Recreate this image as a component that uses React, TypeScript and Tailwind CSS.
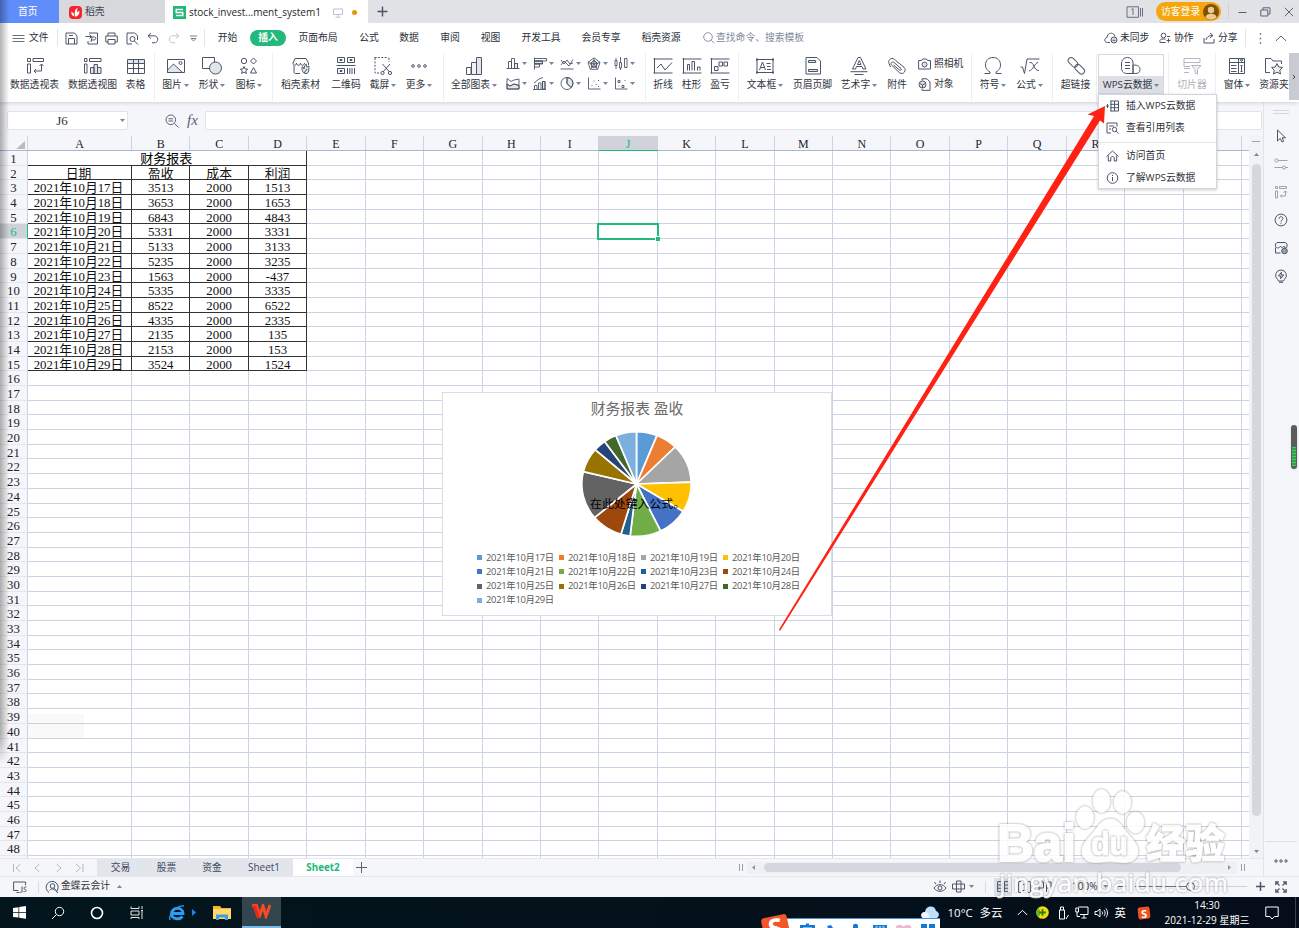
import type { ReactNode } from "react";

import clsx from "clsx";

type Row = [string, string, string, string];
type RibbonItem = { label: string; width: string; icon: ReactNode; caret?: boolean; muted?: boolean };

const rows: Row[] = [
  ["日期", "盈收", "成本", "利润"],
  ["2021年10月17日", "3513", "2000", "1513"],
  ["2021年10月18日", "3653", "2000", "1653"],
  ["2021年10月19日", "6843", "2000", "4843"],
  ["2021年10月20日", "5331", "2000", "3331"],
  ["2021年10月21日", "5133", "2000", "3133"],
  ["2021年10月22日", "5235", "2000", "3235"],
  ["2021年10月23日", "1563", "2000", "-437"],
  ["2021年10月24日", "5335", "2000", "3335"],
  ["2021年10月25日", "8522", "2000", "6522"],
  ["2021年10月26日", "4335", "2000", "2335"],
  ["2021年10月27日", "2135", "2000", "135"],
  ["2021年10月28日", "2153", "2000", "153"],
  ["2021年10月29日", "3524", "2000", "1524"],
];

const sliceColors = [
  "#5b9bd5",
  "#ed7d31",
  "#a5a5a5",
  "#ffc000",
  "#4472c4",
  "#70ad47",
  "#255e91",
  "#9e480e",
  "#636363",
  "#997300",
  "#264478",
  "#43682b",
  "#7cafdd",
];

const columns = "ABCDEFGHIJKLMNOPQRST".split("");
const gridCols = "grid grid-cols-[28px_104px_repeat(19,58.43px)_1fr]";
const line = "border-[#cbd3e5]";

function Svg({
  w = 22,
  h = 20,
  className = "text-[#4c5568]",
  sw = 1,
  children,
}: {
  w?: number;
  h?: number;
  className?: string;
  sw?: number;
  children: ReactNode;
}) {
  return (
    <svg
      width={w}
      height={h}
      viewBox={`0 0 ${w} ${h}`}
      fill="none"
      stroke="currentColor"
      strokeWidth={sw}
      className={clsx("shrink-0", className)}
    >
      {children}
    </svg>
  );
}

function Caret({ up = false }: { up?: boolean }) {
  return (
    <svg width="5" height="3" viewBox="0 0 5 3" className="shrink-0 fill-[#7b8498]">
      <path d={up ? "M0 3h5L2.5 0z" : "M0 0h5L2.5 3z"} />
    </svg>
  );
}

function Sep({ className = "w-2" }: { className?: string }) {
  return (
    <div className={clsx("flex shrink-0 justify-center", className)}>
      <div className="h-[48px] w-px bg-[#eceef2]" />
    </div>
  );
}

const icons = {
  pivotTable: (
    <Svg>
      <path d="M3.5 2.500h3v3h-3zM3.500 8h3v9h-3zM9 2.500h10.500v3H9zM17.500 8v7h-7.500M15.500 10l2-2 2 2M12 13l-2 2 2 2" />
    </Svg>
  ),
  pivotChart: (
    <Svg>
      <path d="M2.500 2.500h2.500v3h-2.500zM2.500 8h2.500v9h-2.500zM7.500 2.500h11.500v3H7.500z" />
      <path d="M8.500 11.500h3.500v6H8.500zM12 8.500h3.500v9H12zM15.500 11.500h3.500v6h-3.500z" fill="#e2e5ea" />
    </Svg>
  ),
  table: (
    <Svg>
      <path d="M2.500 3.500h17v14h-17z" />
      <path d="M3 4h16v3H3z" fill="#e2e5ea" stroke="none" />
      <path d="M2.500 7.500h17M2.500 12.500h17M8.500 3.500v14M13.500 3.500v14" />
    </Svg>
  ),
  picture: (
    <Svg>
      <path d="M2.500 3.500h17v13h-17z" />
      <path d="m2.500 14 6-6 9 8.500h-15z" fill="#e2e5ea" />
      <circle cx="15.500" cy="7" r="1.500" />
    </Svg>
  ),
  shapes: (
    <Svg>
      <path d="M1.500 1.500h12v11h-12z" />
      <circle cx="14.500" cy="12" r="6" fill="#e2e5ea" />
    </Svg>
  ),
  glyphs: (
    <Svg>
      <circle cx="6" cy="5" r="2.700" />
      <path d="m15.500 2 3 3-3 3-3-3zM6 10.500l1.100 2.500 2.600.200-2 1.700.700 2.600-2.400-1.400-2.400 1.400.700-2.600-2-1.700 2.600-.200zM15.500 11.500l3 5.500h-6z" />
    </Svg>
  ),
  store: (
    <Svg>
      <path d="M4 9.500V16c0 1 .5 1.500 1.500 1.500H10M3 7l2-4.500h11L18.500 7v2M3 7c0 3 3.500 3 3.500 0 0 3 4 3 4 0 0 3 4 3 4 0" />
      <path d="M12 11c2-.5 2 2 2 2s0-4 2.500-5c-.5 3 .5 3 .5 3l2-1c-.5 4 .5 7-3 7.500-3.500 0-4-3-4-6.500zM14 17l3-4" fill="#e2e5ea" />
    </Svg>
  ),
  qr: (
    <Svg>
      <path d="M2.500 1.500h7v5h-7zM12.500 1.500h7v5h-7zM2.500 12.500h7v5h-7zM1.500 9.500h19M12.500 12v6M14.800 12v6M17 12v6M19.500 12v6" />
      <path d="M5 3.500h2v1H5zM15 3.500h2v1h-2zM5 14.500h2v1H5z" fill="currentColor" />
    </Svg>
  ),
  crop: (
    <Svg>
      <path d="M2.500 1.500h14M3 2v15h5M17 2v4" strokeDasharray="2 1.400" />
      <path d="m10.500 8 7 8M18 8l-7 8" />
      <circle cx="10.500" cy="17" r="1.600" />
      <circle cx="18" cy="17" r="1.600" />
    </Svg>
  ),
  more: (
    <Svg>
      <circle cx="5" cy="10" r="1.300" />
      <circle cx="11" cy="10" r="1.300" />
      <circle cx="17" cy="10" r="1.300" />
    </Svg>
  ),
  charts: (
    <Svg>
      <path d="M3.500 11.500h4.500v7H3.500zM13.500 1.500h5v17h-5z" />
      <path d="M8.500 6.500h5v12h-5z" fill="#f1f2f5" />
      <path d="M14 2h4v16h-4z" fill="#e2e5ea" stroke="none" />
    </Svg>
  ),
  sparkLine: (
    <Svg>
      <path d="M1.500 3h19M2.500 2v15.500M1.500 17h19M5 12l4-4 4 6 7-7.500" />
    </Svg>
  ),
  sparkBar: (
    <Svg>
      <path d="M1.500 3h19M2.500 2v15.500M1.500 17h19M6.500 14.500V8.500h2v6M11 14.500V5.500h2.500v9M16.500 14.500V11h2.500v3.500" />
    </Svg>
  ),
  sparkWin: (
    <Svg>
      <path d="M1.500 3h19M2.500 2v15.500M1.500 17h19M5.500 10.500h3.500v4H5.500zM10 6h3.500v4H10zM15 6h3.500v4H15z" />
    </Svg>
  ),
  textBox: (
    <Svg>
      <path d="M3 3.500h16v13H3z" />
      <path d="M2 2.500h2v2H2zM18 2.500h2v2h-2zM2 15.500h2v2H2zM18 15.500h2v2h-2z" fill="currentColor" stroke="none" />
      <path d="m5.500 14 3-8 3 8M6.500 11.500h4M12.500 7.500h4M13 10.500h3.500M13 13.500h4" />
    </Svg>
  ),
  headerFooter: (
    <Svg>
      <path d="M4 1.500h11l3.500 3.500v13H4z" />
      <path d="M6.500 4.500h7v2h-7zM6.500 13.500h9v2h-9z" fill="#e2e5ea" />
    </Svg>
  ),
  wordArt: (
    <Svg>
      <path d="M10 1.500h2.500L18 13h-3l-1-2.500H8.500L7.500 13h-3zM9.500 8.500h3.500l-1.700-4zM2.500 15.700h17" />
      <path d="M6.500 18.500h9" />
    </Svg>
  ),
  clip: (
    <Svg>
      <path d="m4.500 11-1.500-3.500c-1-2.500.5-5 3-5 1.500 0 2.500.8 3.500 1.800l8.500 7c3 3-.5 8-4.500 5.500L5.500 9c-1.500-1.500.5-4 2.500-2.500l7 6c1 1-.2 2.500-1.500 1.500L7.500 9" />
    </Svg>
  ),
  omega: (
    <Svg>
      <path d="M2.500 17.500h5.500v-1.500C4.500 14 3.500 11.500 3.500 9c0-4.500 3-7.500 7.500-7.500S18.500 4.500 18.500 9c0 2.500-1 5-4.500 7v1.500h5.500" />
    </Svg>
  ),
  root: (
    <Svg>
      <path d="M1.500 11h2l2 6.500L8 3h12.500M10.500 6.500c5-1 4 8.500 9.500 8M19 6.500c-3 0-5 8-9 8.500" />
    </Svg>
  ),
  link: (
    <Svg>
      <rect x="2.300" y="3.300" width="11" height="6" rx="3" transform="rotate(45 7.800 6.500)" />
      <rect x="9" y="10.200" width="11" height="6" rx="3" transform="rotate(45 14.500 13.500)" />
    </Svg>
  ),
  cloudData: (
    <Svg>
      <path d="M7 17.500c-4 0-5.500-2.500-5.500-6V8C1.500 4 4 1.500 7.500 1.500S13 4 13 7v10.500z" />
      <path d="M13 9c5 0 7 1.500 7 4.500s-2 4-4.500 4H13zM5 6.500h5M5 9.500h5M5 12.500h5" />
    </Svg>
  ),
  slicer: (
    <Svg className="text-[#b4b8c0]">
      <path d="M3 2.500h16v4H3zM9 10.500H3v-4M8 16.500H3M3 12.500h6" />
      <path d="M10.500 9.500h9.500l-3.500 4v4.500l-2.500-1v-3.500z" fill="#f1f2f4" />
    </Svg>
  ),
  form: (
    <Svg>
      <path d="M3.500 2.500h15v15h-15zM3.500 6.500h15M12.500 2.500v15M5 9.500h5.500M5 12.500h5.500M5 15.500h5.500M15.500 9v7" />
      <path d="M14.200 3.800h2.800L15.600 5.500zM14.500 9.500h2M14.500 15.500h2" />
    </Svg>
  ),
  resource: (
    <Svg>
      <path d="M7 16.500H2.500v-14H8l2 2.500h8.500v3" />
      <path d="m14 7.500 1.700 3.500 3.800.500-2.700 2.700.700 3.800-3.500-1.800-3.500 1.800.700-3.800-2.700-2.700 3.800-.500z" fill="#eef0f3" />
    </Svg>
  ),
};

const small = (d: string, fill?: string) => (
  <Svg w={14} h={13} sw={0.9}>
    {fill && <path d={fill} fill="#e2e5ea" />}
    <path d={d} />
  </Svg>
);

const chartIcons = [
  small("M2.500 4.500h3v7M2.500 4.500v7M5.500 11.500V1.500h3v10M8.500 6.500h3v5M.5 11.500h13", "M8.500 6.500h3v5h-3z"),
  small("M1.500.5v12M1.500 1.500h12v2.500h-12M1.500 4h8v3h-8M1.500 7h5v3h-5", "M1.500 4h8v2.500h-8z"),
  small("M.5 12h13M1 8l3-4 5 5 4-6.500M1 3l3 4 3-4 3 4 3-1"),
  small("M7 .8l6 4.500-2.300 7H3.300L1 5.300zM7 3.500l3.200 2.500L9 10H5L3.800 6zM7 1v6M1 5.500l6 1.500 6-1.500M3.500 12 7 7l3.500 5", "M7 3.500l3.200 2.500L9 10H5L3.800 6z"),
  small("M2 1v2.500M2 8.500V12M1 3.500h2v5H1zM6.500 0v5.500M6.500 11v2M5.500 5.500h2V11h-2zM10.500 1.500h2.500v9h-2.500z"),
  small("M1 1.500l4 3 3-1.500 5-1V12H1zM1 7l3 2 4-2 5 1.500", "M1 7l3 2 4-2 5 1.500V12H1z"),
  small("M1.500 12V8.500h2.500V12M5.500 12V6h2.500v6M9.500 12V4.500H12V12M0 12.500h13M1 6l5-4 4-1.500", "M9.500 4.500H12V12H9.500z"),
  small("M13 6.500a6 6 0 1 1-12 0 6 6 0 0 1 12 0zM7 .5v6l4 4", "M7 .5v6l4 4c4-5 1-10-4-10z"),
  small("M1.500.5v11.500h12M4.500 8.500h1M6.500 4h1M8.500 7.500h1M11 3.500h1M11 9.500h1"),
  small("M1.500.5v11.500h12M4 3.500h2v2H4zM4.500 9h1M8 8.500h2v2H8zM10.500 3.500h1"),
];

const groups: RibbonItem[][] = [
  [
    { label: "数据透视表", width: "w-[59px]", icon: icons.pivotTable },
    { label: "数据透视图", width: "w-[57px]", icon: icons.pivotChart },
    { label: "表格", width: "w-[29px]", icon: icons.table },
  ],
  [
    { label: "图片", width: "w-[35px]", icon: icons.picture, caret: true },
    { label: "形状", width: "w-[38px]", icon: icons.shapes, caret: true },
    { label: "图标", width: "w-[36px]", icon: icons.glyphs, caret: true },
  ],
  [
    { label: "稻壳素材", width: "w-[47px]", icon: icons.store },
    { label: "二维码", width: "w-[44px]", icon: icons.qr },
    { label: "截屏", width: "w-[30px]", icon: icons.crop, caret: true },
    { label: "更多", width: "w-[42px]", icon: icons.more, caret: true },
  ],
  [
    { label: "折线", width: "w-[28px]", icon: icons.sparkLine },
    { label: "柱形", width: "w-[29px]", icon: icons.sparkBar },
    { label: "盈亏", width: "w-[28px]", icon: icons.sparkWin },
  ],
  [
    { label: "文本框", width: "w-[46px]", icon: icons.textBox, caret: true },
    { label: "页眉页脚", width: "w-[49px]", icon: icons.headerFooter },
    { label: "艺术字", width: "w-[44px]", icon: icons.wordArt, caret: true },
    { label: "附件", width: "w-[32px]", icon: icons.clip },
  ],
  [
    { label: "符号", width: "w-[36px]", icon: icons.omega, caret: true },
    { label: "公式", width: "w-[37px]", icon: icons.root, caret: true },
  ],
];

function RibbonButton({ item }: { item: RibbonItem }) {
  return (
    <div className={clsx("flex shrink-0 flex-col items-center pt-[3px]", item.width)}>
      {item.icon}
      <div
        className={clsx(
          "mt-[2px] flex items-center gap-[2px] whitespace-nowrap leading-[14px]",
          item.muted ? "text-[#b0b3b9]" : "text-[#30343c]",
        )}
      >
        {item.label}
        {item.caret && <Caret />}
      </div>
    </div>
  );
}

function Group({ items }: { items: RibbonItem[] }) {
  return (
    <>
      {items.map((i) => (
        <RibbonButton key={i.label} item={i} />
      ))}
    </>
  );
}

function TitleBar() {
  return (
    <div className="flex h-[23px] items-center bg-[#e1e2e6] text-[#3c4250]">
      <div className="flex h-full w-[59px] items-center bg-[#5f8df9] pt-[2px] pl-[18px] text-white">首页</div>
      <div className="flex h-full w-[106px] items-center gap-[3px] bg-[#d7d9dd] pt-[2px] pl-[10px]">
        <svg width="13" height="13" viewBox="0 0 13 13">
          <rect width="13" height="13" rx="4" fill="#f4242f" />
          <path d="M6 9.500C5 6 6 3 8.500 1.800 8 4 8.500 5 8 6.500l2.300-1.700c.4 3-1 5.700-4.300 6zM5.300 10.300C3 9.800 2 8 2.500 5.500L5 7.800z" fill="#fff" />
        </svg>
        稻壳
      </div>
      <div className="flex h-full w-[203px] items-center bg-white pt-[2px] pl-[8px] text-[#1c1f26]">
        <svg width="13" height="13" viewBox="0 0 13 13">
          <rect width="13" height="13" fill="#21b978" />
          <path d="M10 3.500H3.200v3h6.600v3H3" fill="none" stroke="#fff" strokeWidth="1.400" />
        </svg>
        <span className="ml-[3px] w-[131px] whitespace-nowrap text-[10px]">stock_invest...ment_system1</span>
        <Svg w={10} h={10} className="ml-[13px] text-[#b8c2da]">
          <path d="M.5 1h9v5.500h-9zM5 6.500V9M2.500 9.200h5" />
        </Svg>
        <span className="ml-[9px] size-[5px] rounded-full bg-[#e8950c]" />
      </div>
      <Svg w={11} h={11} className="ml-[9px] text-[#4a5263]" sw={1.4}>
        <path d="M5.500.5v10M.5 5.500h10" />
      </Svg>
      <div className="flex-1" />
      <Svg w={18} h={12} className="text-[#66708a]">
        <path d="M1 .8h11.500v10.500H1zM14.500 2v8.500M16.500 2v8.500M5.500 3.500 7 2.500v6.500" />
      </Svg>
      <div className="ml-[12.500px] flex h-[19px] w-[65px] items-center rounded-full bg-[#f6a50d] pt-px pl-[5px] text-white">
        <span className="w-[42px]">访客登录</span>
        <svg width="16" height="16" viewBox="0 0 16 16">
          <circle cx="8" cy="8" r="8" fill="#7b5207" />
          <circle cx="8" cy="6" r="3.200" fill="#ecc98c" />
          <path d="M2.500 13.500c0-5 11-5 11 0a8 8 0 0 1-11 0z" fill="#ecc98c" />
        </svg>
      </div>
      <div className="ml-[7px] h-[15px] w-px bg-[#cfd1d6]" />
      <Svg w={9} h={10} className="ml-[9px] text-[#5a6272]">
        <path d="M.5 5.500h8" />
      </Svg>
      <Svg w={11} h={10} className="ml-[13px] text-[#5a6272]">
        <path d="M.8 3h7v6h-7zM3 3V.8h7V7H8" />
      </Svg>
      <Svg w={10} h={10} className="ml-[13px] mr-[5px] text-[#5a6272]">
        <path d="m.8.8 8.400 8.400M9.200.8.800 9.200" />
      </Svg>
    </div>
  );
}

const menuTabs = [
  ["开始", "w-[45px]"],
  ["插入", "w-[36px]"],
  ["页面布局", "w-[64px]"],
  ["公式", "w-[38px]"],
  ["数据", "w-[42px]"],
  ["审阅", "w-[40px]"],
  ["视图", "w-[41px]"],
  ["开发工具", "w-[60px]"],
  ["会员专享", "w-[60px]"],
  ["稻壳资源", "w-[60px]"],
];

function MenuBar() {
  return (
    <div className="flex h-[30px] items-center text-[#2b2f38]">
      <Svg w={13} h={9} className="ml-[12px] text-[#6b7280]">
        <path d="M.5 1.500h12M.5 4.500h12M.5 7.500h12" />
      </Svg>
      <span className="ml-[4px] w-[28px]">文件</span>
      <div className="h-[18px] w-px bg-[#e3e5ea]" />
      <div className="flex w-[146px] items-center pl-[7px]">
        <Svg w={13} h={13}>
          <path d="M1 1h8.500L12 4v8H1zM3.500 12V6.500h6V12M4 3.500h4" />
        </Svg>
        <Svg w={14} h={13} className="ml-[7px] text-[#4c5568]">
          <path d="M4 1h8.500v11H3V9M.5 4.500h6M4.500 2.500l2 2-2 2M6 10l1-5h2.500c2 0 1.500 3-.5 3H6.500" />
        </Svg>
        <Svg w={13} h={13} className="ml-[6px] text-[#4c5568]">
          <path d="M3 4V1h7v3M3 10H.8V4h11.500v6H10M3 7.500h7V12H3z" />
        </Svg>
        <Svg w={13} h={13} className="ml-[8px] text-[#4c5568]">
          <path d="M6 12H1V1h7.500L11.500 3.500V8" />
          <circle cx="6.500" cy="7" r="2.500" />
          <path d="m8.500 9 3.500 3.500" />
        </Svg>
        <Svg w={12} h={12} className="ml-[8px] text-[#4c5568]">
          <path d="M4 1 1 3.800 4 6.500M1 3.800h6c5 0 5 7 0 7H5" />
        </Svg>
        <Svg w={12} h={12} className="ml-[9px] text-[#c3c6cc]">
          <path d="m8 1 3 2.800L8 6.500M11 3.800H5c-5 0-5 7 0 7h2" />
        </Svg>
        <Svg w={7} h={7} className="ml-[10px] text-[#7a8190]">
          <path d="M0 1h7M1 3.500h5L3.500 6z" />
        </Svg>
      </div>
      <div className="h-[18px] w-px bg-[#e3e5ea]" />
      {menuTabs.map(([label, width]) => (
        <div key={label} className={clsx("flex shrink-0 justify-center whitespace-nowrap", width)}>
          {label === "插入" ? (
            <span className="h-4 w-[36px] rounded-full bg-[#21b97c] text-center font-bold leading-4 text-white">{label}</span>
          ) : (
            label
          )}
        </div>
      ))}
      <Svg w={12} h={12} className="ml-[12px] text-[#8b95ab]">
        <circle cx="5" cy="5" r="4.300" />
        <path d="m8.200 8.200 3 3" />
      </Svg>
      <span className="ml-[1px] text-[#7f8a9f]">查找命令、搜索模板</span>
      <div className="flex-1" />
      <Svg w={14} h={12}>
        <path d="M6 10.500H3.500C0 10.500 0 6 3 5.500 3 0 10.500 0 11 4.500" />
        <circle cx="10" cy="8" r="3" fill="#dfe3ea" />
        <path d="M8.500 8.300h3" />
      </Svg>
      <span className="ml-[2px] w-[39px]">未同步</span>
      <Svg w={12} h={12}>
        <circle cx="4.500" cy="3.500" r="2.300" />
        <path d="M6.500 10.500H1c-.5-2 0-3.500 3-3.500h2.500M8 4.500h3M7.500 8.500h4M9.500 6.500v4" />
      </Svg>
      <span className="ml-[3px] w-[29px]">协作</span>
      <Svg w={12} h={12}>
        <path d="M1 6v5h10V7M3 8c.5-3 3-4.500 6-4.500M7 1l3 2.500-3 2.500" />
      </Svg>
      <span className="ml-[3px] w-[27px]">分享</span>
      <div className="h-[18px] w-px bg-[#e3e5ea]" />
      <Svg w={3} h={11} className="ml-[13px] text-[#5a6374]" sw={1.4}>
        <path d="M.8 1h1.400M.8 5.500h1.400M.8 10h1.400" />
      </Svg>
      <Svg w={12} h={7} className="ml-[13px] mr-[12px] text-[#5a6374]">
        <path d="m.8 6 5.200-5 5.200 5" />
      </Svg>
    </div>
  );
}

function Ribbon() {
  return (
    <div className="flex h-[49px] overflow-hidden pl-[5px]">
      <Group items={groups[0]} />
      <Sep />
      <Group items={groups[1]} />
      <Sep className="w-[10px]" />
      <Group items={groups[2]} />
      <Sep className="w-[6px]" />
      <RibbonButton item={{ label: "全部图表", width: "w-[56px]", icon: icons.charts, caret: true }} />
      <div className="grid w-[139px] shrink-0 grid-cols-5 content-start gap-y-[7px] pl-1 pt-1">
        {chartIcons.map((icon, i) => (
          <div key={i} className="flex items-center gap-[2px]">
            {icon}
            <Caret />
          </div>
        ))}
      </div>
      <Sep />
      <Group items={groups[3]} />
      <Sep />
      <Group items={groups[4]} />
      <div className="flex w-[54px] shrink-0 flex-col gap-[6px] pl-[5px] pt-[4px] text-[#30343c]">
        <div className="flex items-center gap-[3px] whitespace-nowrap leading-[14px]">
          <Svg w={13} h={12}>
            <path d="M.6 2.500h3L4.500 1h4l1 1.500h3v8.500H.6z" />
            <circle cx="6.500" cy="6.500" r="2.500" fill="#e2e5ea" />
          </Svg>
          照相机
        </div>
        <div className="flex items-center gap-[3px] whitespace-nowrap leading-[14px]">
          <Svg w={13} h={13}>
            <path d="M4 2.500V.8h5L12 4v8.300H4V11" />
            <circle cx="4.500" cy="6.500" r="3.500" fill="#e2e5ea" />
            <path d="M2 5.500 4.500 7 7 5.500M4.500 7v3" />
          </Svg>
          对象
        </div>
      </div>
      <Sep />
      <Group items={groups[5]} />
      <Sep />
      <RibbonButton item={{ label: "超链接", width: "w-[39px]", icon: icons.link }} />
      <Sep className="w-[3px]" />
      <div className="mt-px flex h-[40px] w-[66px] shrink-0 flex-col border border-[#d4d8de] bg-white">
        <div className="flex h-[21px] justify-center pt-px">{icons.cloudData}</div>
        <div className="flex h-[17px] items-center justify-center gap-[2px] whitespace-nowrap bg-[#dce0e6] pt-px text-[#30343c]">
          WPS云数据
          <Caret />
        </div>
      </div>
      <Sep />
      <RibbonButton item={{ label: "切片器", width: "w-[40px]", icon: icons.slicer, muted: true }} />
      <Sep className="w-[6px]" />
      <RibbonButton item={{ label: "窗体", width: "w-[38px]", icon: icons.form, caret: true }} />
      <div className="w-[33px] shrink-0 overflow-hidden">
        <RibbonButton item={{ label: "资源夹", width: "w-[36px]", icon: icons.resource }} />
      </div>
      <div className="flex h-[47px] w-[10px] shrink-0 items-center justify-center bg-[#c9cbd2]">
        <Svg w={4} h={6} className="text-[#3e4555]">
          <path d="m.8.8 2.200 2.200L.8 5.200" />
        </Svg>
      </div>
    </div>
  );
}

function FormulaBar() {
  return (
    <div className="flex h-[34px] shrink-0 items-center pl-[7px] pt-[3px]">
      <div className="flex h-[19px] w-[121px] items-center rounded-[2px] border border-[#e0e3e8] bg-white">
        <span className="w-[112px] pr-[4px] text-center font-['Liberation_Serif'] text-[13px] text-[#333]">J6</span>
        <Caret />
      </div>
      <Svg w={14} h={14} className="ml-[37px] text-[#5a6377]">
        <circle cx="5.800" cy="5.800" r="4.800" />
        <path d="m9.500 9.500 4 4M3.500 4.800h4.600M3.500 7h4.600" />
      </Svg>
      <span className="ml-[8px] w-[18px] font-['Liberation_Serif'] text-[15px] italic leading-none text-[#596174]">fx</span>
      <div className="mr-px h-[19px] flex-1 rounded-[2px] border border-[#e0e3e8] bg-white" />
    </div>
  );
}

const serif = "font-['Liberation_Serif','Noto_Sans_CJK_SC',serif]";

function Sheet() {
  return (
    <div className={clsx("relative w-[1249px] overflow-hidden", serif)}>
      <div className={clsx(gridCols, "h-[15px] grid-rows-[14px] border-b border-[#a9b8d2] bg-[#f5f6f9]")}>
        <div className="flex items-end justify-end border-r border-[#cbd3e5] pr-[2px] pb-px">
          <svg width="9" height="8" viewBox="0 0 9 8" className="fill-[#b8bbc2]">
            <path d="M9 0v8H0z" />
          </svg>
        </div>
        {columns.map((c) => (
          <div
            key={c}
            className={clsx(
              "relative border-r text-center text-[12px] leading-[17px]",
              c === "J" ? "border-[#d0d3da] bg-[#d0d3da] text-[#21b97c]" : "border-[#cbd3e5] text-[#1e222a]",
            )}
          >
            {/* the last two headers sit under the open menu */}
            {c < "S" && c}
            {c === "J" && <div className="absolute -right-px -bottom-px left-0 h-[1.500px] bg-[#21b97c]" />}
          </div>
        ))}
      </div>
      {Array.from({ length: 49 }, (_, r) => {
        const data = rows[r - 1];
        return (
          <div key={r} className={clsx(gridCols, "h-[14.700px] grid-rows-[14.700px] bg-white")}>
            <div
              className={clsx(
                "border-r border-b text-center text-[12.800px] leading-[16px]",
                r === 5
                  ? "border-b-[#e3e6ed] border-r-[#21b97c] bg-[#cfd2da] text-[#21b97c]"
                  : "border-b-[#e3e6ed] border-r-[#cbd3e5] bg-[#f5f6f9] text-[#1e222a]",
              )}
            >
              {r < 48 ? r + 1 : ""}
            </div>
            {r === 0 && (
              <div className="col-span-4 border-r border-b border-[#333] pr-[2px] text-center text-[13px] leading-[15.500px]">
                财务报表
              </div>
            )}
            {columns.slice(r === 0 ? 4 : 0).map((c, i) => (
              <div
                key={c}
                className={clsx(
                  "border-r border-b text-center text-[12.800px] leading-[16px] whitespace-nowrap",
                  data && i < 4 ? "border-[#333] text-[#111]" : line,
                  c === "J" && r === 5 && "relative",
                  data && i === 0 && "pr-[2px]",
                )}
              >
                {data && i < 4 ? data[i] : null}
                {c === "J" && r === 5 && (
                  <>
                    <div className="absolute -top-px -right-[2px] -bottom-[2px] -left-[2px] border-2 border-[#21b97c]" />
                    <div className="absolute -right-[3px] -bottom-[3px] size-[5px] border-t border-l border-white bg-[#21b97c]" />
                  </>
                )}
              </div>
            ))}
            <div className={clsx("border-b", line)} />
          </div>
        );
      })}
      <div className="absolute top-[578px] left-[28px] h-[24px] w-[56px] bg-[#8a8a8a]/5" />
      <PieCard />
    </div>
  );
}

function PieCard() {
  const values = rows.slice(1).map((r) => Number(r[1]));
  const total = values.reduce((a, b) => a + b, 0);
  const point = (v: number) => {
    const a = (v / total) * Math.PI * 2;
    return `${(55.5 + 54.7 * Math.sin(a)).toFixed(2)} ${(54 - 52.4 * Math.cos(a)).toFixed(2)}`;
  };
  let sum = 0;
  const slices = values.map((v, i) => {
    const from = sum;
    sum += v;
    return (
      <path key={i} d={`M55.5 54L${point(from)}A54.7 52.4 0 0 1 ${point(sum)}Z`} fill={sliceColors[i]} />
    );
  });
  return (
    <div className="absolute top-[256px] left-[442px] h-[224px] w-[390px] border border-[#dcdde0] bg-white">
      <div className="pt-[5px] text-center text-[14.800px] leading-[22px] text-[#6b6b6b]">财务报表 盈收</div>
      <div className="relative mt-[9.500px] ml-[138px] h-[108px] w-[112px]">
        <svg width="112" height="108" stroke="#fff" strokeWidth="1.700">
          {slices}
        </svg>
        <span className="absolute top-[65px] left-[9px] text-[11.900px] leading-[18px] whitespace-nowrap text-black">
          在此处键入公式。
        </span>
      </div>
      <div className="mt-[13px] ml-[34px] grid grid-cols-[repeat(4,82px)] font-['Open_Sans','Noto_Sans_CJK_SC',sans-serif] text-[9.400px] leading-[14.300px] tracking-[-0.280px] text-[#595959]">
        {values.map((_, i) => (
          <div key={i} className="flex items-center gap-[4px] whitespace-nowrap">
            <span className="size-[5px]" style={{ background: sliceColors[i] }} />
            {rows[i + 1][0]}
          </div>
        ))}
      </div>
    </div>
  );
}

function VScroll() {
  return (
    <div className="flex w-[14px] flex-col items-center bg-[#f1f2f5] pt-[5px]">
      <div className="h-px w-[8px] bg-[#97a3bb]" />
      <div className="mt-[11px]">
        <Caret up />
      </div>
      <div className="mt-[8px] h-[652px] w-[9px] rounded-full bg-[#d5d7df]" />
      <div className="mt-[34px]">
        <Caret />
      </div>
    </div>
  );
}

function Sidebar() {
  return (
    <div className="relative flex w-[36px] flex-col items-center border-l border-[#e1e4e9] bg-[#f5f6f9] pr-px">
      <div className="mt-[8px] h-[4px] w-[16px] border-y border-[#d3d6dc]" />
      <div className="mt-[15px] flex flex-col items-center gap-[14px]">
        <Svg w={14} h={14}>
          <path d="M3.500 1v11l2.700-2.500L8 13l1.700-.800L8 8.800h3.500z" />
        </Svg>
        <Svg w={14} h={14} className="text-[#9ba2b0]">
          <circle cx="2.500" cy="3.500" r="1.600" />
          <path d="M4.100 3.500H13.500M.5 10.500h8" />
          <circle cx="10" cy="10.500" r="1.600" />
          <path d="M11.600 10.500H14" />
        </Svg>
        <Svg w={14} h={14} className="text-[#9ba2b0]">
          <path d="M1.500 1.500h2v2h-2zM1.500 6h2v7h-2zM5.500 1.500h7v2h-7zM11.500 6v5h-5M9.500 7.500l2-1.500 1.500 1.500M8 9.500 6.500 11 8 12.500" />
        </Svg>
        <Svg w={14} h={14}>
          <circle cx="7" cy="7" r="5.900" />
          <path d="M5 5.800c0-3 4-2.500 4-.3C9 7 7 6.800 7 8.500M7 9.500v1.200" />
        </Svg>
        <Svg w={14} h={14}>
          <path d="M6.500 12H1.500V6.500M1.500 5.500V3L3 1.500h8.500L13 3v3c-1 1.500-3 1-3-1-1 2-3 2-3.500 0-1 2.500-3.500 2.500-5 .5" />
          <circle cx="10.500" cy="10" r="2.800" fill="#9aa1ae" />
        </Svg>
        <Svg w={14} h={14}>
          <path d="M7 1a5.300 5.300 0 0 1 3.300 9.500L9.500 12h-5l-.800-1.500A5.300 5.300 0 0 1 7 1zM5 13.300h4M7.500 3.200 4.500 7H7l-.500 2.800L9.800 6H7.200z" />
        </Svg>
      </div>
      <div className="mt-[558px] h-px w-[32px] bg-[#dfe1e6]" />
      <Svg w={14} h={4} className="mt-[17px] text-[#4c5568]">
        <circle cx="2" cy="2" r="1.200" />
        <circle cx="7" cy="2" r="1.200" />
        <circle cx="12" cy="2" r="1.200" />
      </Svg>
      <div className="absolute top-[323px] right-[2px] h-[44px] w-[6px] overflow-hidden rounded-full bg-[#5c5c5c] pt-[22px] shadow">
        <div className="mx-px h-[19px] bg-[repeating-linear-gradient(#3ccf62_0_1px,#3b9a4b_1px_3px)]" />
      </div>
    </div>
  );
}

function SheetTabs() {
  return (
    <div className="flex h-[18px] shrink-0 items-center border-t border-[#e5e7ec] bg-[#f5f6f9] text-[#41485a]">
      <Svg w={97} h={12} className="text-[#b0b6c2]">
        <path d="M13.500 2v8M20.500 2l-4.500 4 4.500 4M39.500 2 35 6l4.500 4M56.500 2 61 6l-4.500 4M76 2l4.500 4-4.500 4M83 2v8" />
      </Svg>
      <div className="flex h-full w-[196px] items-center bg-[#e3e5ec] text-center">
        <span className="w-[47px] pt-px">交易</span>
        <span className="w-[45px] pt-px">股票</span>
        <span className="w-[46px] pt-px">资金</span>
        <span className="w-[58px] text-[10px]">Sheet1</span>
      </div>
      <div className="flex h-full w-[60px] items-center justify-center bg-white pt-px text-[9.800px] font-bold text-[#21b97c]">
        Sheet2
      </div>
      <Svg w={11} h={11} className="ml-[3px] text-[#5a6275]">
        <path d="M5.500 0v11M0 5.500h11" />
      </Svg>
      <div className="flex-1" />
      <Svg w={4} h={7} className="text-[#8c95a8]" sw={0.9}>
        <path d="M.5 0v7M3.500 0v7" />
      </Svg>
      <div className="mx-[4px] flex h-[12px] w-[490px] items-center bg-[#eff0f4] pl-[5px]">
        <svg width="3" height="5" className="fill-[#8c95a8]">
          <path d="M3 0v5L0 2.500z" />
        </svg>
        <div className="ml-[9px] h-[9px] w-[417px] rounded-full bg-[#d5d7df]" />
        <svg width="3" height="5" className="ml-[47px] fill-[#8c95a8]">
          <path d="M0 0v5l3-2.500z" />
        </svg>
      </div>
      <Svg w={4} h={7} className="mr-[18px] text-[#8c95a8]" sw={0.9}>
        <path d="M.5 0v7M3.500 0v7" />
      </Svg>
    </div>
  );
}

function StatusBar() {
  return (
    <div className="flex h-[21px] shrink-0 items-center border-t border-[#e5e7ec] bg-[#f5f6f9] pb-px text-[#30343c]">
      <Svg w={14} h={12} className="ml-[13px] text-[#4c5568]">
        <path d="M5.500 9.500H.6V1h12v3M3.500 11.500h3M9 5.500v5c0 1-1.500 1-2 .5M13.500 6c-3-.5-3 2-1.500 2.300 2 .500 1 3-1.500 2.200" />
      </Svg>
      <div className="ml-[11px] h-[12px] w-px bg-[#dadde3]" />
      <Svg w={14} h={14} className="ml-[6px] text-[#4c5568]">
        <path d="M4 12.500a6 6 0 1 1 7-.5" />
        <circle cx="7.500" cy="6" r="2.300" />
        <path d="M4.500 10.500c1.500-2 4-2 5.500 0M9 8l4 5" />
      </Svg>
      <span className="ml-[2px] w-[56px]">金蝶云会计</span>
      <Caret up />
      <div className="flex-1" />
      <Svg w={14} h={13}>
        <path d="M1 8c3-4.500 9-4.500 12 0-3 4.500-9 4.500-12 0zM7 3V.5M3 4 1.500 2M11 4l1.500-2" />
        <circle cx="7" cy="8" r="2" />
      </Svg>
      <Svg w={14} h={13} className="ml-[5px] mr-[3px] text-[#4c5568]">
        <path d="M.5 4h12v5H.5zM4.500 1h4.500v11H4.500z" />
      </Svg>
      <Caret />
      <div className="ml-[11px] h-[12px] w-px bg-[#dadde3]" />
      <div className="ml-[8px] flex h-[18px] w-[18px] items-center justify-center bg-[#dce0e7]">
        <Svg w={13} h={11}>
          <path d="M.6.600h5v10h-5zM7.500.600h5v10h-5zM.6 4h5M.6 7.300h5M7.500 4h5M7.500 7.300h5" />
        </Svg>
      </div>
      <Svg w={13} h={12} className="ml-[6px] text-[#4c5568]">
        <path d="M3 .6H.6v10.800H3M10 .6h2.400v10.800H10M6.500 3v6M4.500 9.500h4M5 4l1.500-1.500L8 4" />
      </Svg>
      <Svg w={14} h={12} className="ml-[7px] text-[#4c5568]">
        <path d="M1 11V1h4.500v6H1M8.500 11V1H13v8M8.500 7H12" />
      </Svg>
      <span className="ml-[20px] w-[31px] text-[10px]">100%</span>
      <Caret />
      <div className="ml-[10px] h-px w-[8px] bg-[#4c5568]" />
      <div className="ml-[9px] flex w-[112px] items-center">
        <div className="h-px w-[51px] bg-[#687187]" />
        <div className="size-[9px] rounded-full border border-[#4c5568] bg-white" />
        <div className="h-px flex-1 bg-[#cdd1d9]" />
      </div>
      <Svg w={9} h={9} className="ml-[9px] text-[#4c5568]" sw={1.5}>
        <path d="M4.500 0v9M0 4.500h9" />
      </Svg>
      <Svg w={12} h={12} className="ml-[10px] mr-[12px] text-[#4c5568]" sw={1.2}>
        <path d="M4 .8H.8V4M1 1l3.500 3.500M8 .8h3.200V4M11 1 7.500 4.500M4 11.200H.8V8M1 11l3.500-3.500M8 11.200h3.200V8M11 11 7.500 7.500" />
      </Svg>
    </div>
  );
}

function Taskbar() {
  return (
    <div className="relative flex h-[31px] shrink-0 items-center overflow-hidden bg-gradient-to-r from-[#03161d] to-[#040d19] text-white">
      <svg width="13" height="13" viewBox="0 0 13 13" className="ml-[13px] fill-white">
        <path d="M0 2l5.500-.8V6H0zM6.200 1.100 13 0v6H6.200zM0 6.800h5.500v4.800L0 11zM6.200 6.800H13v6l-6.800-1z" />
      </svg>
      <Svg w={14} h={14} className="ml-[25px] text-white">
        <circle cx="8.500" cy="5.500" r="4.200" />
        <path d="M5.500 8.500 1 13" />
      </Svg>
      <Svg w={14} h={14} className="ml-[25px] text-white" sw={1.6}>
        <circle cx="7" cy="7" r="5.500" />
      </Svg>
      <Svg w={14} h={13} className="ml-[26px] text-white" sw={0.9}>
        <path d="M1 .5v2h8v-2M1 5h8v4H1zM1 13v-1.500h8V13M12 0v3M12 5v8M11 4.500h2" />
      </Svg>
      <Svg w={18} h={18} className="ml-[24px] text-[#2d9bf0]" sw={2.8}>
        <path d="M3.500 9.500h11.500c0-7-11-7-11.500 0 0 6 8 6.500 11 3" />
        <path d="M2 16C0 11 9 1 16 2" strokeWidth="1.300" />
      </Svg>
      <svg width="4" height="7" className="ml-[6px] fill-[#1787f5]">
        <path d="M0 0l4 3.500L0 7z" />
      </svg>
      <svg width="18" height="15" viewBox="0 0 18 15" className="ml-[17px]">
        <path d="M0 1h7l1.500 2H18v11H0z" fill="#f1b62d" />
        <path d="M0 4h18v10H0z" fill="#ffd869" />
        <path d="M3 15V9.500h12V15h-3v-2.500H6V15z" fill="#3d9fe0" />
      </svg>
      <div className="ml-[11px] flex h-full w-[39px] items-center justify-center border-b-2 border-[#76b9ed] bg-[#33464e]">
        <svg width="19" height="15" viewBox="0 0 19 15" fill="none" strokeWidth="3">
          <path d="M0 1.500h4.500l3.500 10" stroke="#ff3c2a" />
          <path d="M7 13.500 11 2l3 10 4-11" stroke="#f94a20" />
          <path d="m2 2 4.500 12" stroke="#e02b1c" />
        </svg>
      </div>
      <div className="flex-1" />
      <svg width="18" height="13" viewBox="0 0 18 13">
        <path d="M4 12.500C-1 12.500-1 6 4 6c1-7 10-7 11-1 4 1 4 7.500-1 7.500z" fill="#bfe2fb" />
        <path d="M4 12.500C-1 12.500-1 6 4 6c3 0 4 2 5 6.500z" fill="#e9f6ff" />
      </svg>
      <span className="ml-[9px] w-[32px] text-[11.500px]">10°C</span>
      <span className="w-[37px] text-[11.500px]">多云</span>
      <Svg w={11} h={7} className="text-white">
        <path d="m.8 6 4.700-4.700L10.200 6" />
      </Svg>
      <svg width="13" height="13" viewBox="0 0 13 13" className="ml-[8px]">
        <circle cx="6.500" cy="6.500" r="6.300" fill="#f5d90a" />
        <path d="M3 2a6 6 0 0 0-1 9c3-1 2-6 1-9z" fill="#5fb524" />
        <path d="M6.500 3.200v6.600M3.200 6.500h6.600" stroke="#1a7d1c" strokeWidth="1.800" />
      </svg>
      <Svg w={12} h={14} className="ml-[8px] text-white">
        <path d="M2.500 4h5v9h-5zM3.500 4V1h3v3M9 13l2.500-4" />
      </Svg>
      <Svg w={14} h={13} className="ml-[6px] text-white">
        <path d="M3.500 1h9.500v7.500H5M.8 2h2.700v4H.8zM2 6v4.500h3M9 8.500V12M6.500 12h5" />
      </Svg>
      <Svg w={14} h={12} className="ml-[5px] text-white">
        <path d="M1 4.500h2L6 2v8L3 7.500H1zM8 4.500c.8 1 .8 2 0 3M10 3c1.500 2 1.500 4 0 6M12 1.500c2 3 2 6 0 9" />
      </Svg>
      <span className="ml-[7px] text-[11.500px]">英</span>
      <div className="ml-[12px] flex size-[12px] -rotate-6 items-center justify-center rounded-[2px] bg-[#f0501e] text-[11px] font-bold leading-none">
        S
      </div>
      <div className="ml-[13px] w-[88px] text-center text-[10px] leading-[14.500px] whitespace-nowrap">
        <div>14:30</div>
        <div>2021-12-29 星期三</div>
      </div>
      <Svg w={14} h={14} className="ml-[14px] text-white">
        <path d="M.8 1h12.400v9.500H9.500L7 13l-2-2.500H.8z" />
      </Svg>
      <div className="mr-[3px] ml-[16px] h-full w-px bg-[#37434c]" />
      {/* input method bar, mostly below the screen edge */}
      <div className="absolute top-[21px] left-[775px] h-[10px] w-[165px] border-t border-[#4b8fd8] bg-white">
        <svg width="165" height="10" fill="#1678d6">
          <path d="M25 6h6V4.500h3V6h6v4h-3V8.500h-9V10h-3zM52 7l4-1 2 3h-5zM78 10V7c0-3 5-3 5 0v3zM98 6h14v4H98zM146 5h6v5h-6zM154 5h6v5h-6z" />
          <path d="M122 6h4c2 1.500 3 1.500 5 0h4l2 4h-17z" fill="#f1b7d7" />
          <path d="M100.500 8h2M104 8h2M107.500 8h2" stroke="#fff" />
        </svg>
      </div>
      <div className="absolute top-[19px] left-[763px] flex size-[26px] -rotate-12 justify-center rounded-[3px] bg-[#f2562b] text-[27px] font-bold leading-[24px]">
        S
      </div>
    </div>
  );
}

function CloudMenu() {
  const row = "flex h-[22px] items-center gap-[7px] pl-[7px]";
  return (
    <div className="absolute top-[94px] left-[1098px] h-[95px] w-[119px] border border-[#d2d5da] bg-white text-[#2b2f38] shadow-[0_1px_3px_rgba(0,0,0,0.2)]">
      <div className={row}>
        <Svg w={13} h={12}>
          <path d="M4 1h8.500v10H4M4 4.300h8.500M4 7.700h8.500M8.500 1v10M5 1v10M0 6h3M1.500 4v4" />
        </Svg>
        插入WPS云数据
      </div>
      <div className={row}>
        <Svg w={13} h={12}>
          <path d="M5 11H1V1h10v3.500M3 4h5M3 7h2" />
          <circle cx="8.500" cy="7.500" r="2.200" />
          <path d="m10 9.200 2.500 2.300" />
        </Svg>
        查看引用列表
      </div>
      <div className="mt-[3px] mb-[2px] h-px bg-[#e3e5e9]" />
      <div className={row}>
        <Svg w={13} h={12}>
          <path d="m.6 6.500 5.900-5.500 5.900 5.500M2.300 5.500V11h2.500V8c0-2 3.400-2 3.400 0v3h2.500V5.500" />
        </Svg>
        访问首页
      </div>
      <div className={row}>
        <Svg w={13} h={12}>
          <circle cx="6.500" cy="6" r="5.300" />
          <path d="M6.500 5v4M6.500 2.800V4" />
        </Svg>
        了解WPS云数据
      </div>
    </div>
  );
}

function Watermark() {
  return (
    <svg
      width="250"
      height="125"
      viewBox="990 780 250 125"
      className="pointer-events-none absolute top-[780px] left-[990px] [&>*]:drop-shadow-[0_0_0.8px_rgba(90,90,90,0.75)]"
      fill="#fff"
      opacity="0.85"
      stroke="#fff"
      strokeWidth="1"
    >
      <ellipse cx="1085" cy="817.500" rx="8.500" ry="11" />
      <ellipse cx="1101.500" cy="801" rx="8.500" ry="11.500" />
      <ellipse cx="1122.500" cy="802.500" rx="8.500" ry="11" />
      <ellipse cx="1135.500" cy="822.500" rx="8.500" ry="10.500" />
      <path d="M1110 819c9 0 12 8 18 15 8 8 12 15 9 22-4 8-13 7-27 5-14 2-23 3-27-5-3-7 1-14 9-22 6-7 9-15 18-15z" />
      <text x="997" y="861" fontSize="52" fontWeight="700" textLength="79" lengthAdjust="spacingAndGlyphs" fontFamily="Liberation Sans" strokeWidth="2">
        Bai
      </text>
      <text x="1091" y="855" fontSize="33" fontWeight="700" textLength="37" lengthAdjust="spacingAndGlyphs" fontFamily="Liberation Sans">
        du
      </text>
      <text x="1146" y="858" fontSize="39.500" fontWeight="900" fontFamily="Noto Sans CJK SC">
        经验
      </text>
      <text x="999" y="892" fontSize="26" textLength="229" fontWeight="400" fontFamily="Open Sans" strokeWidth="0.600">
        jingyan.baidu.com
      </text>
    </svg>
  );
}

export default function App() {
  return (
    <div className="relative flex h-[928px] w-[1299px] flex-col overflow-hidden bg-[#f5f6f9] font-['Open_Sans','Noto_Sans_CJK_SC',sans-serif] text-[9.800px]">
      <div className="z-10 h-[102px] shrink-0 bg-white shadow-[0_1px_4px_rgba(0,0,0,0.15)]">
        <TitleBar />
        <MenuBar />
        <Ribbon />
      </div>
      <div className="flex h-[774px] shrink-0">
        <div className="flex w-[1263px] flex-col">
          <FormulaBar />
          <div className="flex h-[722px] shrink-0 overflow-hidden">
            <Sheet />
            <VScroll />
          </div>
          <SheetTabs />
        </div>
        <Sidebar />
      </div>
      <StatusBar />
      <Taskbar />
      <div className="pointer-events-none absolute top-0 left-0 z-10 h-[765px] w-[9px] bg-gradient-to-r from-black/30 to-transparent [mask-image:linear-gradient(#000_96%,transparent)]" />
      <div className="absolute top-0 left-0 z-20">
        <CloudMenu />
        <Watermark />
        <svg width="340" height="540" viewBox="772 100 340 540" className="pointer-events-none absolute top-[100px] left-[772px]">
          <path d="M779 629.500l315-513.500-6.500-1.500 17.500-8.500-1 17.500-4-3-320 510.500z" fill="#ff2113" />
        </svg>
      </div>
    </div>
  );
}
